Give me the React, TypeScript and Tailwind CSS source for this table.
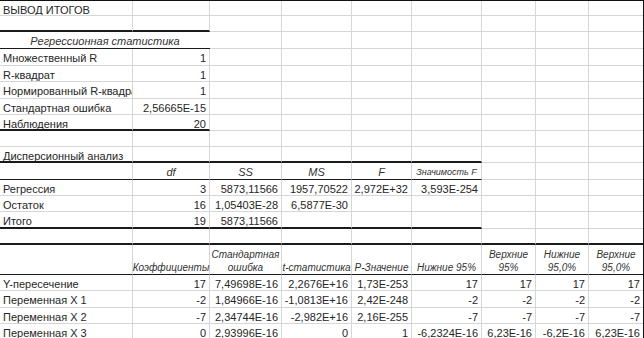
import React from "react";

type Cell = { t?: string; a?: "l" | "r" | "c"; k?: "it" | "sm"; span?: 2 };
type Row = { h: string; b?: "t" | "T"; n?: number; head?: boolean; cells: Cell[] };

const r = (t: string): Cell => ({ t, a: "r" });

const rows: Row[] = [
  { h: "h-[15px]", cells: [{ t: "ВЫВОД ИТОГОВ" }] },
  { h: "h-[16px]", b: "T", n: 2, cells: [] },
  { h: "h-[17px]", b: "t", n: 2, cells: [{ t: "Регрессионная статистика", a: "c", k: "it", span: 2 }] },
  { h: "h-[17px]", cells: [{ t: "Множественный R" }, r("1")] },
  { h: "h-[16px]", cells: [{ t: "R-квадрат" }, r("1")] },
  { h: "h-[17px]", cells: [{ t: "Нормированный R-квадрат" }, r("1")] },
  { h: "h-[16px]", cells: [{ t: "Стандартная ошибка" }, r("2,56665E-15")] },
  { h: "h-[16px]", b: "T", n: 2, cells: [{ t: "Наблюдения" }, r("20")] },
  { h: "h-[16px]", cells: [] },
  { h: "h-[16px]", b: "T", n: 6, cells: [{ t: "Дисперсионный анализ" }] },
  {
    h: "h-[17px]",
    b: "t",
    n: 6,
    cells: [
      {},
      { t: "df", a: "c", k: "it" },
      { t: "SS", a: "c", k: "it" },
      { t: "MS", a: "c", k: "it" },
      { t: "F", a: "c", k: "it" },
      { t: "Значимость F", a: "c", k: "sm" },
    ],
  },
  { h: "h-[16px]", cells: [{ t: "Регрессия" }, r("3"), r("5873,11566"), r("1957,70522"), r("2,972E+32"), r("3,593E-254")] },
  { h: "h-[16px]", cells: [{ t: "Остаток" }, r("16"), r("1,05403E-28"), r("6,5877E-30")] },
  { h: "h-[17px]", b: "T", n: 6, cells: [{ t: "Итого" }, r("19"), r("5873,11566")] },
  { h: "h-[16px]", b: "T", n: 9, cells: [] },
  {
    h: "h-[30px]",
    b: "t",
    n: 9,
    head: true,
    cells: [
      {},
      { t: "Коэффициенты" },
      { t: "Стандартная\nошибка" },
      { t: "t-статистика" },
      { t: "P-Значение" },
      { t: "Нижние 95%" },
      { t: "Верхние\n95%" },
      { t: "Нижние\n95,0%" },
      { t: "Верхние\n95,0%" },
    ],
  },
  {
    h: "h-[16px]",
    cells: [{ t: "Y-пересечение" }, r("17"), r("7,49698E-16"), r("2,2676E+16"), r("1,73E-253"), r("17"), r("17"), r("17"), r("17")],
  },
  {
    h: "h-[17px]",
    cells: [{ t: "Переменная X 1" }, r("-2"), r("1,84966E-16"), r("-1,0813E+16"), r("2,42E-248"), r("-2"), r("-2"), r("-2"), r("-2")],
  },
  {
    h: "h-[16px]",
    cells: [{ t: "Переменная X 2" }, r("-7"), r("2,34744E-16"), r("-2,982E+16"), r("2,16E-255"), r("-7"), r("-7"), r("-7"), r("-7")],
  },
  {
    h: "h-[17px]",
    cells: [
      { t: "Переменная X 3" },
      r("0"),
      r("2,93996E-16"),
      r("0"),
      r("1"),
      r("-6,2324E-16"),
      r("6,23E-16"),
      r("-6,2E-16"),
      r("6,23E-16"),
    ],
  },
];

const align = { l: "justify-start", r: "justify-end", c: "justify-center" };
const kind = {
  it: "italic text-[11px] text-[#333]",
  sm: "italic text-[9px] text-[#333]",
};

function SheetRow({ row }: { row: Row }) {
  const cells: { c: Cell; col: number }[] = [];
  let col = 0;
  for (let i = 0; col < 9; i++) {
    const c = row.cells[i] ?? {};
    cells.push({ c, col });
    col += c.span ?? 1;
  }

  return (
    <div className={`grid grid-cols-[133px_77px_72px_70px_60px_70px_54px_53px_54px] ${row.h}`}>
      {cells.map(({ c, col }) => {
        const last = col + (c.span ?? 1) === 9;
        const bottom =
          row.n && col < row.n
            ? row.b === "T"
              ? "border-b-2 border-b-[#1a1a1a]"
              : "border-b border-b-[#1a1a1a]"
            : "border-b border-b-[#d6d6d6]";
        const right = last || c.span ? "" : "border-r border-r-[#d6d6d6]";

        if (row.head) {
          return (
            <div
              key={col}
              className={`flex items-end justify-center whitespace-pre text-center text-[10px] italic leading-[13px] text-[#333] ${bottom} ${right}`}
            >
              {c.t}
            </div>
          );
        }

        return (
          <div
            key={col}
            className={`flex items-start overflow-hidden whitespace-nowrap px-[3px] pt-[4px] leading-[11px] ${
              align[c.a ?? "l"]
            } ${c.k ? kind[c.k] : ""} ${c.span ? "col-span-2" : ""} ${bottom} ${right}`}
          >
            {c.t}
          </div>
        );
      })}
    </div>
  );
}

export default function App() {
  return (
    <div className="h-[338px] w-[644px] overflow-hidden border-r border-t border-[#111] bg-white font-['Liberation_Sans',Arial,sans-serif] text-[11px] text-[#262626]">
      {rows.map((row, i) => (
        <SheetRow key={i} row={row} />
      ))}
    </div>
  );
}
